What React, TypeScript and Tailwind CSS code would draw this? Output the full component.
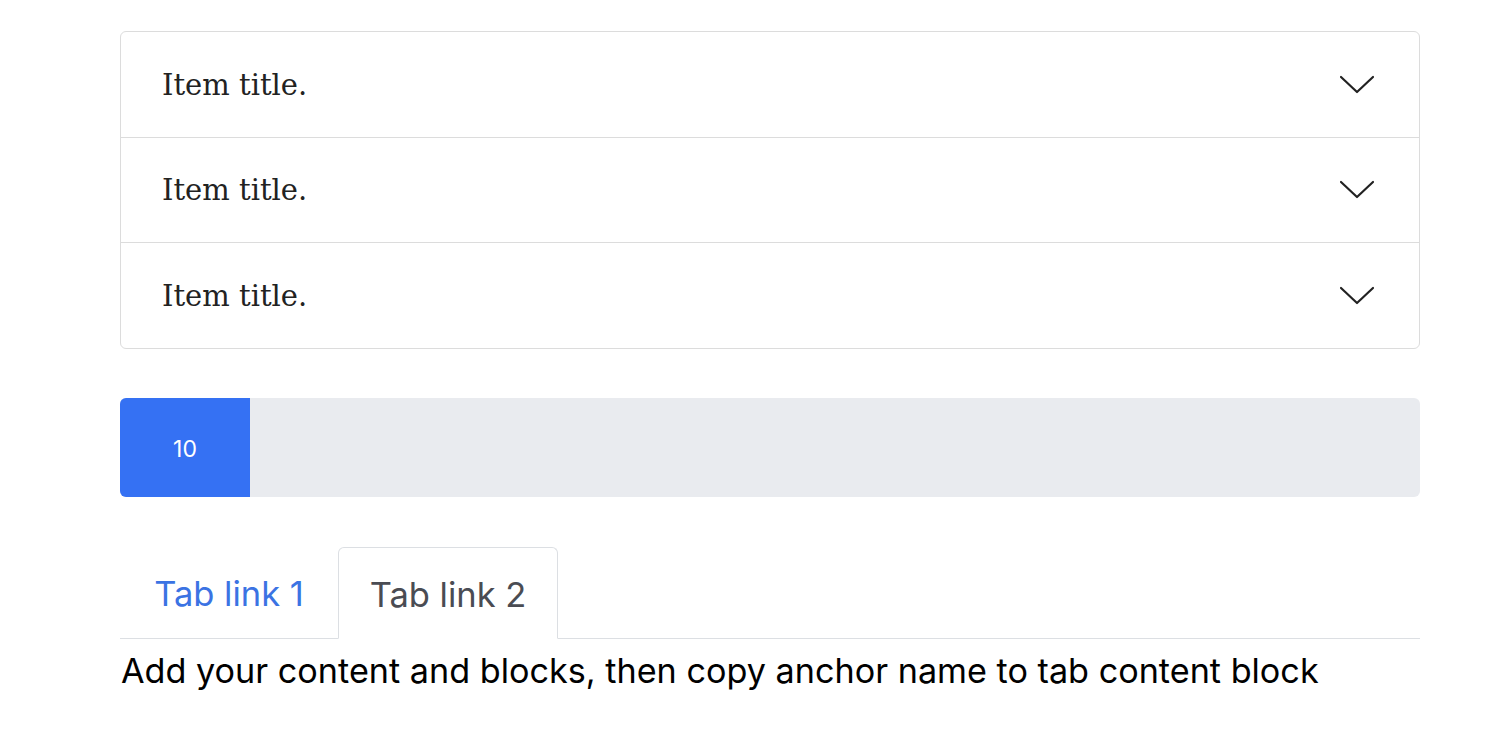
import React from "react";

const Chevron = () => (
  <svg width="36" height="20" viewBox="0 0 36 20" fill="none">
    <path d="M2 2 L18 17 L34 2" stroke="#222" strokeWidth="2.2" strokeLinecap="round" strokeLinejoin="round" />
  </svg>
);

export default function App() {
  const items = ["Item title.", "Item title.", "Item title."];
  return (
    <div className="w-[1494px] h-[730px] bg-white" style={{ fontFamily: 'Inter, "Liberation Sans", Arial, sans-serif' }}>
      <div className="ml-[120px] w-[1300px] pt-[31px]">
        <div className="border border-[#dcdcdc] rounded-[6px] overflow-hidden">
          {items.map((t, i) => (
            <div
              key={i}
              className={`flex items-center justify-between ${i === 2 ? "h-[106px]" : "h-[105px]"} pl-[41px] pr-[44px] ${i > 0 ? "border-t border-[#dcdcdc]" : ""}`}
            >
              <span className="text-[29px] text-[#222] mt-[2px]" style={{ fontFamily: '"DejaVu Serif", serif' }}>{t}</span>
              <Chevron />
            </div>
          ))}
        </div>

        <div className="mt-[49px] h-[99px] bg-[#e9ebef] rounded-[6px] overflow-hidden flex">
          <div className="w-[130px] h-full bg-[#3571f3] flex items-center justify-center text-white text-[23px] pt-[3px]">10</div>
        </div>

        <div className="mt-[50px] flex border-b border-[#dcdfe3] h-[92px]">
          <div className="w-[218px] flex items-center justify-center text-[34.5px] text-[#3b73e3] pt-[3px]">Tab link 1</div>
          <div className="w-[220px] flex items-center justify-center text-[34.5px] text-[#4a4c53] pt-[3px] border border-[#dcdfe3] border-b-white rounded-t-[6px] -mb-px bg-white">Tab link 2</div>
        </div>
        <div className="pl-px text-[34.2px] text-black leading-[1.2] mt-[11px]">Add your content and blocks, then copy anchor name to tab content block</div>
      </div>
    </div>
  );
}
